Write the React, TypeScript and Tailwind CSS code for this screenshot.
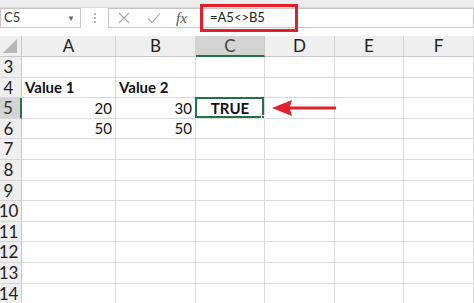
import React from 'react';

const cols = ['A', 'B', 'C', 'D', 'E', 'F'];
const rows = [3, 4, 5, 6, 7, 8, 9, 10, 11, 12, 13, 14];

// cell contents by row / column
const data: Record<number, Record<string, { text: string; bold?: boolean; align: string }>> = {
  4: {
    A: { text: 'Value 1', bold: true, align: 'justify-start' },
    B: { text: 'Value 2', bold: true, align: 'justify-start' },
  },
  5: {
    A: { text: '20', align: 'justify-end' },
    B: { text: '30', align: 'justify-end' },
    C: { text: 'TRUE', bold: true, align: 'justify-center' },
  },
  6: {
    A: { text: '50', align: 'justify-end' },
    B: { text: '50', align: 'justify-end' },
  },
};

const FormulaBar = () => (
  <div className="relative h-[36px] bg-white">
    <div className="h-[8px] bg-[#ececec] border-b border-[#dcdcdc]" />
    <div className="flex items-center h-[20px]">
      <div className="w-[81px] h-[20px] border border-[#c6c6c6] bg-white flex items-center justify-between pl-[3px] pr-[5px] text-[13px] text-[#333]">
        <span>C5</span>
        <span className="text-[8px] text-[#666]">▼</span>
      </div>
      <div className="w-[27px] flex flex-col items-center gap-[2px]">
        <span className="w-[2px] h-[2px] bg-[#b0b0b0]" />
        <span className="w-[2px] h-[2px] bg-[#b0b0b0]" />
        <span className="w-[2px] h-[2px] bg-[#b0b0b0]" />
      </div>
      <div className="flex-1 h-[20px] border border-[#c6c6c6] bg-white flex items-center">
        <div className="w-[91px] flex items-center">
          <svg width="12" height="12" viewBox="0 0 12 12" className="ml-[9px]">
            <path d="M1 1 L11 11 M11 1 L1 11" stroke="#a8a8a8" strokeWidth="1.1" />
          </svg>
          <svg width="14" height="12" viewBox="0 0 14 12" className="ml-[17px]">
            <path d="M1 6.5 L5 10.5 L13 1.5" stroke="#a8a8a8" strokeWidth="1.1" fill="none" />
          </svg>
          <span className="ml-[15px] font-['Liberation_Serif',serif] italic text-[15px] text-[#555] leading-none">fx</span>
        </div>
        <span className="pl-[10px] text-[13px] text-[#222]">=A5&lt;&gt;B5</span>
      </div>
    </div>
    {/* red highlight box */}
    <div className="absolute left-[200px] top-[4px] w-[98px] h-[28px] border-[3px] border-[#e0202a]" />
  </div>
);

export default function App() {
  return (
    <div className="w-[474px] h-[303px] overflow-hidden bg-white font-['Lato',sans-serif] relative">
      <FormulaBar />
      <div className="grid grid-cols-[22px_94px_80px_69px_70px_69px_70px]">
        {/* header row */}
        <div className="h-[21px] bg-[#efefef] border-r border-b border-[#c8c8c8] relative overflow-hidden">
          <svg width="16" height="16" viewBox="0 0 16 16" className="absolute right-[3px] bottom-[2px]">
            <path d="M15 1 L15 15 L1 15 Z" fill="#b8b8b8" />
          </svg>
        </div>
        {cols.map((c) => (
          <div
            key={c}
            className={
              c === 'C'
                ? 'h-[21px] bg-[#d4d4d4] border-r border-[#c8c8c8] border-b-2 border-b-[#217346] flex items-center justify-center text-[17px] text-[#444]'
                : 'h-[21px] bg-[#efefef] border-r border-[#d6d6d6] border-b border-b-[#c8c8c8] flex items-center justify-center text-[17px] text-[#222]'
            }
          >
            {c}
          </div>
        ))}

        {rows.map((r) => (
          <React.Fragment key={r}>
            <div
              className={
                r === 5
                  ? 'h-[20.6px] bg-[#d4d4d4] border-b border-[#d6d6d6] border-r-2 border-r-[#217346] flex items-center justify-center pr-[4px] text-[17px] text-[#333]'
                  : 'h-[20.6px] bg-[#efefef] border-b border-[#d6d6d6] border-r border-r-[#c8c8c8] flex items-center justify-center pr-[4px] text-[17px] text-[#222]'
              }
            >
              {r}
            </div>
            {cols.map((c) => {
              const cell = data[r]?.[c];
              return (
                <div
                  key={c}
                  className={`h-[20.6px] border-r border-b border-[#dadada] flex items-center px-[3px] text-[15px] text-[#111] relative ${cell ? cell.align : ''} ${cell?.bold ? 'font-bold' : ''}`}
                >
                  {cell?.text}
                  {r === 5 && c === 'C' && (
                    <div className="absolute -left-[1px] -top-[1px] -right-[0px] -bottom-[0px] border-2 border-[#217346]">
                      <div className="absolute -right-[3px] -bottom-[3px] w-[4px] h-[4px] bg-[#217346] border border-white" />
                    </div>
                  )}
                </div>
              );
            })}
          </React.Fragment>
        ))}
      </div>

      {/* red arrow pointing at C5 */}
      <svg width="66" height="20" viewBox="0 0 66 20" className="absolute left-[271px] top-[98px]">
        <path d="M1 10 L21 2 L19 8.5 L65 8.5 L65 11.5 L19 11.5 L21 18 Z" fill="#e0202a" />
      </svg>
    </div>
  );
}
